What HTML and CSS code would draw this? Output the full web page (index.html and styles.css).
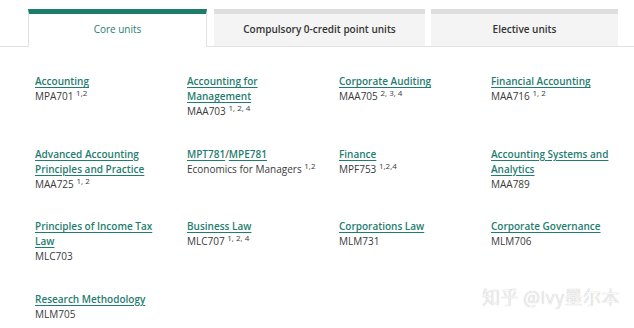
FILE: index.html
```html
<!DOCTYPE html>
<html lang="en">
<head>
  <meta charset="UTF-8">
  <title>Course structure</title>
  <link rel="stylesheet" href="styles.css">
</head>
<body>

  <div class="tabs">
    <div class="tab active">Core units</div>
    <div class="tab tab-wide">Compulsory 0-credit point units</div>
    <div class="tab tab-last">Elective units</div>
  </div>

  <div class="units">
    <div class="unit">
      <div class="unit-name"><a href="#">Accounting</a></div>
      <div class="unit-code">MPA701 <sup>1,2</sup></div>
    </div>
    <div class="unit">
      <div class="unit-name"><a href="#">Accounting for Management</a></div>
      <div class="unit-code">MAA703 <sup>1, 2, 4</sup></div>
    </div>
    <div class="unit">
      <div class="unit-name"><a href="#">Corporate Auditing</a></div>
      <div class="unit-code">MAA705 <sup>2, 3, 4</sup></div>
    </div>
    <div class="unit">
      <div class="unit-name"><a href="#">Financial Accounting</a></div>
      <div class="unit-code">MAA716 <sup>1, 2</sup></div>
    </div>

    <div class="unit">
      <div class="unit-name"><a href="#">Advanced Accounting Principles and Practice</a></div>
      <div class="unit-code">MAA725 <sup>1, 2</sup></div>
    </div>
    <div class="unit">
      <div class="unit-name"><a href="#">MPT781</a>/<a href="#">MPE781</a></div>
      <div class="unit-code">Economics for Managers <sup>1,2</sup></div>
    </div>
    <div class="unit">
      <div class="unit-name"><a href="#">Finance</a></div>
      <div class="unit-code">MPF753 <sup>1,2,4</sup></div>
    </div>
    <div class="unit">
      <div class="unit-name"><a href="#">Accounting Systems and Analytics</a></div>
      <div class="unit-code">MAA789</div>
    </div>

    <div class="unit">
      <div class="unit-name"><a href="#">Principles of Income Tax Law</a></div>
      <div class="unit-code">MLC703</div>
    </div>
    <div class="unit">
      <div class="unit-name"><a href="#">Business Law</a></div>
      <div class="unit-code">MLC707 <sup>1, 2, 4</sup></div>
    </div>
    <div class="unit">
      <div class="unit-name"><a href="#">Corporations Law</a></div>
      <div class="unit-code">MLM731</div>
    </div>
    <div class="unit">
      <div class="unit-name"><a href="#">Corporate Governance</a></div>
      <div class="unit-code">MLM706</div>
    </div>

    <div class="unit">
      <div class="unit-name"><a href="#">Research Methodology</a></div>
      <div class="unit-code">MLM705</div>
    </div>
  </div>

  <div class="watermark">知乎 @Ivy墨尔本</div>

</body>
</html>
```

FILE: styles.css
```css
body { margin: 0; font-family: "Open Sans", "Noto Sans", sans-serif; color: #333; background: #fff; position: relative; height: 328px; overflow: hidden; }

.tabs { display: flex; gap: 7px; padding: 9px 0 0 28px; border-bottom: 1px solid #e2e2e2; }
.tab { box-sizing: border-box; height: 37px; border-top: 5px solid #dedede; background: #f4f4f4; display: flex; align-items: center; justify-content: center; font-size: 10px; font-weight: 600; color: #333; padding-bottom: 2px; }
.tab.active { width: 179px; height: 38px; margin-bottom: -1px; background: #fff; border-top-color: #1b7d6a; border-left: 1px solid #e2e2e2; border-right: 1px solid #e2e2e2; color: #2a7c72; font-weight: 400; padding-bottom: 3px; }
.tab-wide { width: 211px; }
.tab-last { width: 187px; margin-left: -1px; }

.units { display: grid; grid-template-columns: repeat(4, 152px); row-gap: 27.5px; padding: 27px 0 0 35px; font-size: 10px; line-height: 15px; }
.unit-name { max-width: 126px; }
.unit-name a { color: #1f7d70; font-weight: 600; text-decoration: underline; text-underline-offset: 2px; }
.unit-code { color: #3a3a3a; white-space: nowrap; }
.unit-code sup { font-size: 8px; line-height: 0; vertical-align: 4px; }

.watermark { position: absolute; right: 14px; bottom: 19px; font-family: "Noto Sans CJK SC", sans-serif; font-size: 18px; font-weight: 300; color: #fafafa; text-shadow: 0 0 1px #9a9a9a; letter-spacing: 0.5px; }
```
